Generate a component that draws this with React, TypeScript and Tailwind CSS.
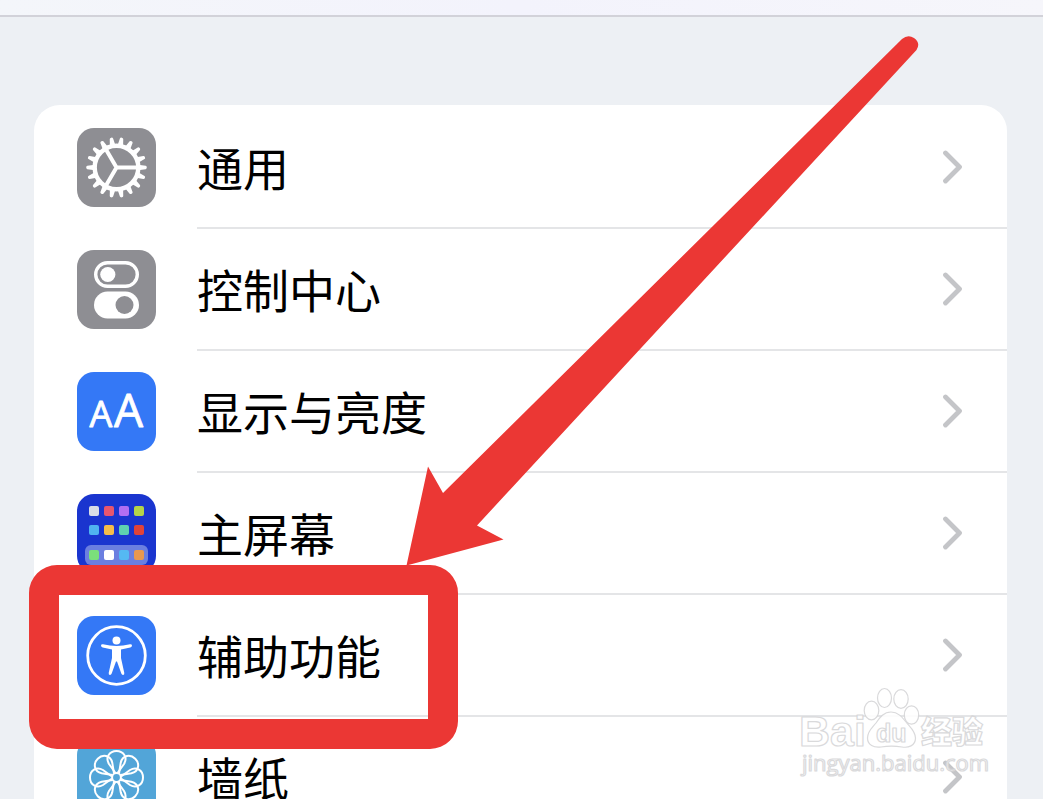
import type { ReactNode } from "react";

const teeth = Array.from({ length: 18 }, (_, i) => i * 20);
const petals = Array.from({ length: 8 }, (_, i) => i * 45);

function Tile({ color, children }: { color: string; children: ReactNode }) {
  return (
    <svg viewBox="0 0 79 79" aria-hidden="true" className="mb-0.5 size-[79px] shrink-0">
      <rect width="79" height="79" rx="17" fill={color} />
      {children}
    </svg>
  );
}

function GearIcon() {
  return (
    <Tile color="#8e8e93">
      <g transform="translate(39.5 39.5)">
        {teeth.map((angle) => (
          <path
            key={angle}
            d="M21 -3.6 L23.5 -2.6 L29.2 -1.7 Q30.3 -1.4 30.3 0 Q30.3 1.4 29.2 1.7 L23.5 2.6 L21 3.6 Z"
            fill="#fff"
            transform={`rotate(${angle})`}
          />
        ))}
        <circle r="21.8" fill="none" stroke="#fff" strokeWidth="4.4" />
        <path d="M0 0H21M0 0L-10.8 -18.500M0 0L-10.8 18.500" stroke="#fff" strokeWidth="4" fill="none" />
      </g>
    </Tile>
  );
}

function TogglesIcon() {
  return (
    <Tile color="#8e8e93">
      <rect x="18.7" y="12.7" width="41.6" height="23.6" rx="11.8" fill="none" stroke="#fff" strokeWidth="3.4" />
      <circle cx="30.8" cy="24.5" r="7.6" fill="#fff" />
      <rect x="17" y="41.5" width="45" height="27" rx="13.5" fill="#fff" />
      <circle cx="47.5" cy="55" r="9" fill="#8e8e93" />
    </Tile>
  );
}

function TextSizeIcon() {
  return (
    <Tile color="#3478f6">
      <g
        fill="#fff"
        fontFamily="'Open Sans', 'Liberation Sans', sans-serif"
        stroke="#fff"
        strokeWidth="0.8"
        strokeLinejoin="round"
        textAnchor="middle"
      >
        <text x="24" y="55" fontSize="36">A</text>
        <text x="51.5" y="55" fontSize="46">A</text>
      </g>
    </Tile>
  );
}

const apps: [number, number, string][] = [
  [12, 12, "#d9dde6"],
  [27, 12, "#e7566e"],
  [42, 12, "#b16ff2"],
  [57, 12, "#b4d448"],
  [12, 31, "#50b4f0"],
  [27, 31, "#f6bd4a"],
  [42, 31, "#5fd0b0"],
  [57, 31, "#e24338"],
  [12, 56, "#7be07b"],
  [27, 56, "#ffffff"],
  [42, 56, "#55b9f3"],
  [57, 56, "#e8984f"],
];

function HomeScreenIcon() {
  return (
    <Tile color="#1a35cf">
      <rect x="8" y="51" width="63" height="20" rx="6" fill="#6b7fe0" />
      {apps.map(([x, y, fill]) => (
        <rect key={`${x}-${y}`} x={x} y={y} width="10" height="10" rx="2" fill={fill} />
      ))}
    </Tile>
  );
}

function AccessibilityIcon() {
  return (
    <Tile color="#3478f6">
      <circle cx="39.5" cy="39.5" r="28.8" fill="none" stroke="#fff" strokeWidth="2.8" />
      <circle cx="39.5" cy="24.5" r="4" fill="#fff" />
      <path
        d="M26 28.2 Q33 30 39.5 30 Q46 30 53 28.2 Q55 28 55 29.6 Q55 31 53.3 31.4 L44 33.4 V42 L47.3 57 Q47.5 58.8 46 59 Q44.8 59 44.3 57.6 L40 45.5 H39 L34.7 57.6 Q34.2 59 33 59 Q31.5 58.8 31.7 57 L35 42 V33.4 L25.7 31.4 Q24 31 24 29.6 Q24 28 26 28.2Z"
        fill="#fff"
      />
    </Tile>
  );
}

function WallpaperIcon() {
  return (
    <Tile color="#52a5d8">
      <g transform="translate(39.5 39.5)" fill="none" stroke="#fff" strokeWidth="2">
        {petals.map((angle) => (
          <path
            key={angle}
            d="M-1 -4.5 L-7.5 -13.5 C-11.500 -20 -7 -26.5 0 -26.5 C7 -26.5 11.500 -20 7.5 -13.5 L1 -4.5"
            transform={`rotate(${angle})`}
          />
        ))}
        <circle r="4.4" />
      </g>
    </Tile>
  );
}

function Chevron() {
  return (
    <svg viewBox="0 0 22 34" aria-hidden="true" className="h-[34px] w-[22px] shrink-0">
      <path d="M3.5 3 L17.500 17 L3.5 31" fill="none" stroke="#c4c5c8" strokeWidth="4.800" strokeLinecap="round" strokeLinejoin="round" />
    </svg>
  );
}

const items = [
  { label: "通用", icon: <GearIcon /> },
  { label: "控制中心", icon: <TogglesIcon /> },
  { label: "显示与亮度", icon: <TextSizeIcon /> },
  { label: "主屏幕", icon: <HomeScreenIcon /> },
  { label: "辅助功能", icon: <AccessibilityIcon />, highlighted: true },
  { label: "墙纸", icon: <WallpaperIcon /> },
];

function Watermark() {
  return (
    <svg viewBox="0 0 200 100" aria-hidden="true" className="h-[100px] w-[200px]">
      <g fill="#fff" stroke="#d6d6d8" strokeWidth="1.2" strokeLinejoin="round">
        <ellipse cx="79.500" cy="30.500" rx="7.3" ry="9.3" />
        <ellipse cx="92.500" cy="18" rx="7" ry="9.5" />
        <ellipse cx="109" cy="19" rx="7.2" ry="9.3" />
        <ellipse cx="119.500" cy="35" rx="7.2" ry="9.2" />
        <path d="M99 32 C106 32 110 37 114 42 C118 47 123.500 51 123.500 58 C123.500 66 116 68 110 67 C104 66 95 66 89 67 C82 68 75.500 65 75.500 58 C75.500 51 80 48 84 43 C88 37 92 32 99 32Z" />
        <g fontFamily="'Liberation Sans', 'Noto Sans CJK SC', sans-serif">
          <text x="7" y="66" fontSize="43" fontWeight="700">Bai</text>
          <text x="84" y="62" fontSize="25" fontWeight="700">du</text>
          <text x="129" y="63" fontSize="31" fontWeight="900" fontFamily="'Noto Sans CJK SC', sans-serif">经验</text>
          <text x="10" y="91" fontSize="22" fontFamily="'Open Sans', sans-serif">jingyan.baidu.com</text>
        </g>
      </g>
    </svg>
  );
}

export default function App() {
  return (
    <div className="relative h-screen overflow-hidden bg-[#edf0f4] font-['Liberation_Sans','Noto_Sans_CJK_SC',sans-serif] text-black">
      <header className="h-[17px] border-b-2 border-[#d2d2d9] bg-linear-to-r from-[#f4f6fa] via-[#f3f3fc] to-[#f6f6fb]" />

      <main className="pt-[88px] pr-9 pl-[34px]">
        <ul className="rounded-t-[26px] bg-white pt-0.5">
          {items.map(({ label, icon, highlighted }) => (
            <li key={label} className="relative">
              <a href="#" className="flex h-[122px] items-center pl-[43px]">
                {icon}
                <span className="ml-[41px] flex h-full flex-1 items-center justify-between border-b-2 border-[#e4e5e7] pr-[43px]">
                  <span className="pt-1.5 text-[46px] leading-[60px]">{label}</span>
                  <Chevron />
                </span>
              </a>
              {highlighted && (
                <span className="pointer-events-none absolute top-[-30px] left-[-5px] z-10 h-[184px] w-[429px] rounded-[28px] border-[30px] border-[#eb3734]" />
              )}
            </li>
          ))}
        </ul>
      </main>

      <svg
        viewBox="0 0 520 540"
        aria-hidden="true"
        className="pointer-events-none absolute top-[30px] left-[400px] z-20 h-[540px] w-[520px]"
      >
        <path
          d="M6.500 535.500 L28 436.500 L43 463 L502 9 Q508 4 514 8 Q521 13 516.500 20 L77 495.500 L103.500 509.500Z"
          fill="#eb3734"
        />
      </svg>

      <div className="pointer-events-none absolute right-[51px] bottom-[19px] z-20 opacity-90">
        <Watermark />
      </div>
    </div>
  );
}
